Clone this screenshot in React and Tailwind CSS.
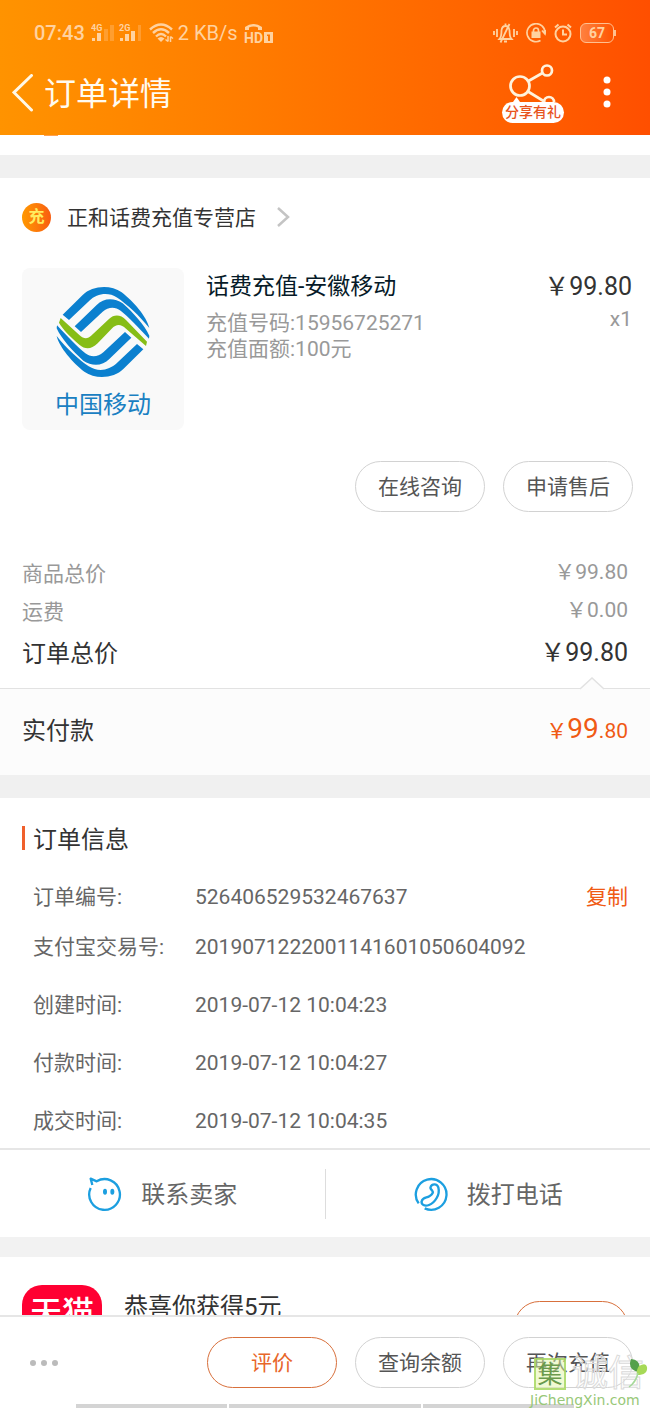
import React from "react";

const PRICE_ROWS = [
	{ label: "商品总价", value: "\uFFE599.80" },
	{ label: "运费", value: "\uFFE50.00" },
];

const ORDER_INFO = [
	{ label: "订单编号:", value: "526406529532467637", space: "", copy: true },
	{
		label: "支付宝交易号:",
		value: "2019071222001141601050604092",
		space: "mt-5",
	},
	{ label: "创建时间:", value: "2019-07-12 10:04:23", space: "mt-7" },
	{ label: "付款时间:", value: "2019-07-12 10:04:27", space: "mt-7" },
	{ label: "成交时间:", value: "2019-07-12 10:04:35", space: "mt-7" },
];

const SignalIcon = () => (
	<svg width="52" height="20" viewBox="0 0 52 20" fill="currentColor">
		<text x="0" y="8" fontSize="9" fontWeight="700">
			4G
		</text>
		<rect x="1" y="15" width="3" height="3" />
		<rect x="6" y="10" width="4" height="8" />
		<rect x="13" y="6" width="4" height="12" opacity="0.3" />
		<rect x="19" y="2" width="4" height="16" opacity="0.3" />
		<text x="28" y="8" fontSize="9" fontWeight="700">
			2G
		</text>
		<rect x="29" y="15" width="3" height="3" />
		<rect x="34" y="11" width="4" height="7" />
		<rect x="40" y="8" width="4" height="10" />
		<rect x="47" y="2" width="3" height="16" opacity="0.3" />
	</svg>
);

const WifiIcon = () => (
	<svg
		width="25"
		height="20"
		viewBox="0 0 25 20"
		fill="none"
		stroke="currentColor"
		strokeWidth="2.4"
	>
		<path d="M1 6.5Q12 -3.5 23 6.5" />
		<path d="M4 10Q12 2.5 20 10" />
		<path d="M7 13.5Q12 8.5 17 13.5" />
		<path
			d="M8.5 15.5Q12 12.5 15.5 15.5L12 19Z"
			fill="currentColor"
			stroke="none"
		/>
		<path
			d="M19 13v5.5M16.5 16.5l2.5 2M21.5 19v-5.5M24 15.500l-2.500-2"
			strokeWidth="1.5"
		/>
	</svg>
);

const HdIcon = () => (
	<svg width="30" height="21" viewBox="0 0 30 21" fill="currentColor">
		<path d="M1 7V4Q9 -2 18 4V7H14V4.5Q9.5 2.5 5 4.5V7Z" />
		<text x="0" y="20" fontSize="14" fontWeight="700">
			HD
		</text>
		<path
			fillRule="evenodd"
			d="M20 9h9v11h-9zM23 11.5v1.500h1v5h2v-6.500z"
		/>
	</svg>
);

const VibrateIcon = () => (
	<svg
		width="25"
		height="22"
		viewBox="0 0 25 22"
		fill="none"
		stroke="currentColor"
		strokeWidth="1.8"
	>
		<path d="M1 9v4M4 7v8M24 9v4M21 7v8" />
		<path d="M6.5 17Q8.5 15 8.5 8.5Q9 4 12.5 4T16.5 8.5Q16.5 15 18.5 17ZM12.5 4V1.5M11 19.5h3M7.5 20.5L16.5 2" />
	</svg>
);

const LockIcon = () => (
	<svg
		width="20"
		height="20"
		viewBox="0 0 20 20"
		fill="none"
		stroke="currentColor"
		strokeWidth="1.7"
	>
		<path d="M14.5 17.500A9 9 0 1 1 19 10M16 7.500L19 11L20 7" />
		<rect x="5.500" y="8.500" width="9" height="6.500" fill="currentColor" stroke="none" />
		<path d="M7.5 9V7.5a2.5 2.5 0 0 1 5 0V9" />
	</svg>
);

const AlarmIcon = () => (
	<svg
		width="18"
		height="20"
		viewBox="0 0 18 20"
		fill="none"
		stroke="currentColor"
		strokeWidth="2"
	>
		<circle cx="9" cy="11" r="7.500" />
		<path d="M9 6.5V11.5H13M1 4.5L4.5 1.5M17 4.5L13.5 1.5" />
	</svg>
);

const StatusBar = () => (
	<div className="flex h-[66px] items-center justify-between pl-[34px] pr-[36px] text-xl text-[#ffd2a0]">
		<div className="flex items-center">
			<span className="font-medium">07:43</span>
			<span className="mr-1.5 ml-1.5">
				<SignalIcon />
			</span>
			<WifiIcon />
			<span className="mr-1.5 ml-1">2 KB/s</span>
			<HdIcon />
		</div>
		<div className="flex items-center gap-2">
			<VibrateIcon />
			<LockIcon />
			<AlarmIcon />
			<span className="relative flex h-5 w-[34px] items-center justify-center rounded-md border-[1.5px] border-[#ffc090] bg-linear-to-r from-[#ff8040] to-transparent text-sm leading-4 font-bold">
				67
				<span className="absolute top-1.5 -right-[3px] h-1.5 w-0.5 bg-[#ffc090]" />
			</span>
		</div>
	</div>
);

const ShareButton = () => (
	<button type="button" className="flex flex-col items-center">
		<svg
			width="62"
			height="38"
			viewBox="0 0 62 38"
			fill="none"
			stroke="#fff3dc"
			strokeWidth="2.7"
		>
			<circle cx="18" cy="22" r="9.500" />
			<circle cx="45" cy="6.500" r="5" />
			<circle cx="47" cy="38" r="5" />
			<path d="M26.5 17L40.5 9M26 27.5L43 38" />
			<path d="M11 38L14.5 33L18 38Z" fill="#fff" stroke="none" />
		</svg>
		<span className="h-[21px] rounded-full bg-white px-[3px] text-sm leading-[21px] font-medium text-[#e8541e]">
			分享有礼
		</span>
	</button>
);

const Header = () => (
	<header className="shrink-0 bg-linear-to-r from-[#ff9300] to-[#ff4f00] pb-[15px]">
		<StatusBar />
		<div className="flex h-[54px] items-center pr-[36px] pl-3">
			<button type="button" aria-label="返回">
				<svg
					width="22"
					height="38"
					viewBox="0 0 22 38"
					fill="none"
					stroke="#fff8e8"
					strokeWidth="3"
					strokeLinecap="round"
				>
					<path d="M19.5 1.5L2 18.5L19.5 36" />
				</svg>
			</button>
			<h1 className="ml-2.5 flex-1 pt-0.5 text-[32px] leading-10 text-[#fffbf0]">
				订单详情
			</h1>
			<ShareButton />
			<button type="button" aria-label="更多" className="ml-9">
				<svg width="14" height="34" viewBox="0 0 14 34" fill="#fff">
					<circle cx="7" cy="4" r="3.500" />
					<circle cx="7" cy="16" r="3.500" />
					<circle cx="7" cy="28" r="3.500" />
				</svg>
			</button>
		</div>
	</header>
);

const MobileLogo = () => (
	<svg width="94" height="94" viewBox="18 13 282 282" className="fill-[#0b80cf]">
		<g id="waves">
			<path d="M38 102L98 43C125 16 180 10 215 35C250 62 290 108 298 142C268 104 230 70 202 51C172 32 140 40 118 60L57 118Z" />
			<path d="M74 137L140 73C160 52 192 50 218 68C248 94 285 135 298 165L297 174C265 140 235 108 212 90C195 77 175 78 158 93L93 154Z" />
		</g>
		<use href="#waves" transform="rotate(180 159 154)" />
		<path
			className="fill-[#86bd16]"
			d="M32 112L88 163C103 177 113 175 125 164L177 115C193 100 212 102 228 118L291 183L288 196L228 144C212 129 199 130 185 144L143 188C122 208 105 206 88 192C60 168 38 145 27 126Z"
		/>
	</svg>
);

const PillButton = ({ children, primary }) => (
	<button
		type="button"
		className={`h-[51px] w-[130px] rounded-full border-[1.5px] pt-0.5 text-[21px] ${
			primary
				? "border-[#d8703c] text-[#e8662a]"
				: "border-[#d2d2d2] text-[#555]"
		}`}
	>
		{children}
	</button>
);

const Divider = () => <div className="h-[23px] bg-[#f0f0f0]" />;

const Product = () => (
	<section>
		<a href="#shop" className="flex h-[78px] items-center pl-[22px]">
			<span className="flex size-[29px] items-center justify-center rounded-full bg-linear-to-r from-[#ff9800] to-[#f85c10] text-base leading-none font-bold text-[#ffec60]">
				充
			</span>
			<span className="ml-4 pt-1 text-[21px] text-[#333]">
				正和话费充值专营店
			</span>
			<svg
				width="14"
				height="22"
				viewBox="0 0 14 22"
				fill="none"
				stroke="#c4c4c4"
				strokeWidth="2.5"
				className="ml-5"
			>
				<path d="M2 2L12 11L2 20" />
			</svg>
		</a>
		<div className="flex pt-3 pr-[18px] pl-[22px]">
			<div className="flex size-[162px] shrink-0 flex-col items-center rounded-lg bg-[#f9f9f9] pt-[17px]">
				<MobileLogo />
				<span className="mt-2 text-2xl leading-9 text-[#1a80c2]">
					中国移动
				</span>
			</div>
			<div className="ml-[22px] flex-1 pt-0.5">
				<h2 className="text-[23px] leading-[34px] text-[#061a28]">
					话费充值-安徽移动
				</h2>
				<p className="mt-1.5 text-[21px] leading-[26px] text-[#999]">
					充值号码:15956725271
				</p>
				<p className="text-[21px] leading-[26px] text-[#999]">
					充值面额:100元
				</p>
			</div>
			<div className="pt-0.5 text-right">
				<p className="text-[25px] leading-[34px] text-[#333]">
					{"\uFFE5"}99.80
				</p>
				<p className="text-[21px] leading-[30px] text-[#999]">x1</p>
			</div>
		</div>
		<div className="flex justify-end gap-[18px] pt-[31px] pr-[17px]">
			<PillButton>在线咨询</PillButton>
			<PillButton>申请售后</PillButton>
		</div>
	</section>
);

const PriceSummary = () => (
	<section>
		<div className="px-[22px] pt-[42px] pb-3">
			{PRICE_ROWS.map((row) => (
				<div
					key={row.label}
					className="flex h-[38px] items-center justify-between text-[21px] text-[#999]"
				>
					<span className="pt-1">{row.label}</span>
					<span>{row.value}</span>
				</div>
			))}
			<div className="flex h-[46px] items-center justify-between text-[#333]">
				<span className="pt-0.5 text-2xl">订单总价</span>
				<span className="text-[25px]">{"\uFFE5"}99.80</span>
			</div>
		</div>
		<div className="relative flex h-[87px] items-center justify-between border-t border-[#e2e2e2] bg-[#fcfcfc] px-[22px] pb-1">
			{/* notch pointing at the total above */}
			<svg
				width="24"
				height="13"
				viewBox="0 0 24 13"
				fill="#fcfcfc"
				stroke="#e2e2e2"
				strokeWidth="1.5"
				className="absolute -top-3 right-[46px]"
			>
				<path d="M0 12L12 1L24 12" />
			</svg>
			<span className="pt-0.5 text-2xl text-[#333]">实付款</span>
			<span className="pb-0.5 text-[21px] text-[#f05a14]">
				{"\uFFE5"}
				<span className="text-[28px]">99</span>.80
			</span>
		</div>
	</section>
);

const OrderInfo = () => (
	<section className="border-b-2 border-[#e6e6e6] pr-[22px] pb-3">
		<div className="flex h-20 items-center pl-[22px]">
			<span className="h-6 w-[3px] bg-[#f0602c]" />
			<h2 className="ml-2 pt-1 text-2xl text-[#333]">订单信息</h2>
		</div>
		<dl className="pt-1 pl-[33px] text-[21px] leading-[30px] text-[#666]">
			{ORDER_INFO.map((item) => (
				<div key={item.label} className={`flex ${item.space}`}>
					<dt className="w-[162px] shrink-0">{item.label}</dt>
					<dd className="flex-1">{item.value}</dd>
					{item.copy && (
						<dd>
							<button type="button" className="text-[#f05a14]">
								复制
							</button>
						</dd>
					)}
				</div>
			))}
		</dl>
	</section>
);

const ContactBar = () => (
	<section className="flex h-[87px] items-center text-2xl text-[#666]">
		<button
			type="button"
			className="flex h-[50px] flex-1 items-center justify-center gap-[18px] border-r border-[#ddd]"
		>
			<svg
				width="36"
				height="36"
				viewBox="262 104 108 108"
				fill="none"
				stroke="#1c9fe0"
				strokeWidth="7"
				strokeLinejoin="round"
			>
				<path d="M273 140A46 46 0 1 0 291 120L273 112L278 131" />
				<ellipse cx="316" cy="151" rx="6" ry="9" fill="#1c9fe0" stroke="none" />
				<ellipse cx="338" cy="151" rx="6" ry="9" fill="#1c9fe0" stroke="none" />
			</svg>
			<span className="pt-0.5">联系卖家</span>
		</button>
		<button
			type="button"
			className="flex h-[50px] flex-1 items-center justify-center gap-[18px]"
		>
			<svg
				width="36"
				height="36"
				viewBox="262 104 108 108"
				fill="none"
				stroke="#1c9fe0"
				strokeWidth="7"
				strokeLinejoin="round"
			>
				<path d="M279 186A46 46 0 1 1 297 201" />
				<path d="M315 136C319 127 334 126 338 138C344 160 328 184 310 191C297 196 286 190 288 180C290 168 303 170 311 165C321 159 324 153 319 147C315 143 313 140 315 136Z" />
			</svg>
			<span className="pt-0.5">拨打电话</span>
		</button>
	</section>
);

const Promo = () => (
	<section className="flex items-start px-[22px] pt-7">
		<span className="flex size-20 shrink-0 justify-center rounded-[20px] bg-[#ff0032] pt-2 text-[32px] leading-10 font-medium text-white">
			天猫
		</span>
		<p className="ml-[22px] flex-1 pt-0.5 text-2xl leading-10 text-[#333]">
			恭喜你获得5元
		</p>
		<button
			type="button"
			aria-label="领取"
			className="mt-4 h-[51px] w-[114px] rounded-full border-[1.5px] border-[#d8703c]"
		/>
	</section>
);

const Watermark = () => (
	<div className="pointer-events-none absolute right-0 bottom-0 flex w-[120px] flex-col">
		<div className="flex items-center pl-1">
			<span className="flex size-8 items-center justify-center border-2 border-[#a4d65e]/80 bg-[#e2f5a8]/50 text-[25px] leading-none text-[#6a9a4c]">
				集
			</span>
			<span className="ml-1.5 text-4xl leading-9 text-white/50 [-webkit-text-stroke:1px_#dadada]">
				诚信
			</span>
			<svg
				width="20"
				height="30"
				viewBox="0 0 20 30"
				className="absolute top-0.5 right-0.5"
			>
				<path d="M3 1Q14 2 11 14Q-1 12 3 1Z" fill="#55a04a" />
				<path d="M11 8Q18 4 19 9Q20 17 9 17Q8 12 11 8Z" fill="#a6d957" />
				<path d="M10 15Q8 24 1 29" fill="none" stroke="#a6d99a" strokeWidth="1.5" />
			</svg>
		</div>
		<span className="font-['DejaVu_Sans',sans-serif] text-sm leading-4 text-[#98c878]">
			JiChengXin.com
		</span>
	</div>
);

const ActionBar = () => (
	<footer className="relative shrink-0 border-t-2 border-[#e6e6e6] bg-white pt-5">
		<div className="flex items-center gap-[18px] pr-[17px] pl-[29px]">
			<button type="button" aria-label="更多操作" className="mr-auto">
				<svg width="30" height="8" viewBox="0 0 30 8" fill="#bbb">
					<circle cx="4" cy="4" r="3" />
					<circle cx="15" cy="4" r="3" />
					<circle cx="26" cy="4" r="3" />
				</svg>
			</button>
			<PillButton primary>评价</PillButton>
			<PillButton>查询余额</PillButton>
			<PillButton>再次充值</PillButton>
		</div>
		<div className="mt-4 flex h-1 gap-0.5 px-[76px]">
			<span className="w-[151px] bg-[#d4d4d4]" />
			<span className="flex-1 bg-[#d4d4d4]" />
			<span className="w-[151px] bg-[#d4d4d4]" />
		</div>
		<Watermark />
	</footer>
);

const App = () => {
	return (
		<div className="flex h-screen flex-col bg-white font-[Roboto,'Noto_Sans_CJK_SC',sans-serif]">
			<Header />
			<main className="min-h-0 flex-1 overflow-y-auto [scrollbar-width:none]">
				<div className="h-5">
					<div className="ml-11 h-px w-3.5 bg-[#ffa050]" />
				</div>
				<Divider />
				<Product />
				<PriceSummary />
				<Divider />
				<OrderInfo />
				<ContactBar />
				<div className="h-5 bg-[#f2f2f2]" />
				<Promo />
			</main>
			<ActionBar />
		</div>
	);
};

export default App;
